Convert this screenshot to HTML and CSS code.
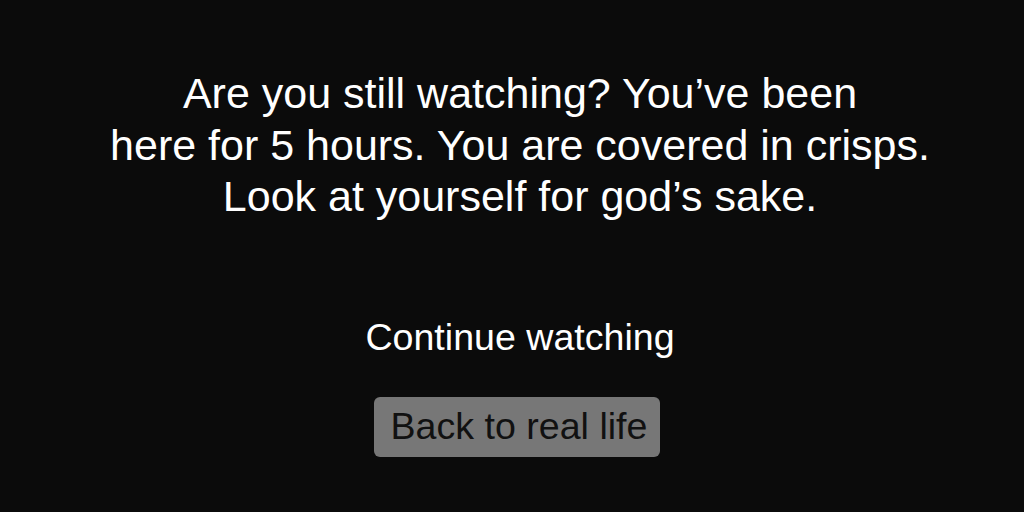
FILE: index.html
```html
<!DOCTYPE html>
<html lang="en">
<head>
<meta charset="utf-8">
<title>Are you still watching?</title>
<link rel="stylesheet" href="styles.css">
</head>
<body>
<main class="screen">
  <h1 class="prompt">Are you still watching? You’ve been<br>here for 5 hours. You are covered in crisps.<br>Look at yourself for god’s sake.</h1>
  <div class="actions">
    <a class="link" href="#">Continue watching</a>
    <button class="btn" type="button">Back to real life</button>
  </div>
</main>
</body>
</html>
```

FILE: styles.css
```css
html, body {
  margin: 0;
  padding: 0;
  background: #0b0b0b;
  height: 100%;
  overflow: hidden;
}
.screen {
  box-sizing: border-box;
  height: 512px;
  padding: 68px 0 0 16px;
  display: flex;
  flex-direction: column;
  align-items: center;
  font-family: "Liberation Sans", Arial, Helvetica, sans-serif;
  color: #ffffff;
  text-align: center;
}
.prompt {
  margin: 0;
  font-size: 43px;
  font-weight: normal;
  line-height: 51.5px;
}
.actions {
  margin-top: 93px;
  display: flex;
  flex-direction: column;
  align-items: center;
  gap: 38px;
}
.link {
  color: #ffffff;
  text-decoration: none;
  font-size: 37.6px;
  line-height: normal;
}
.btn {
  font-family: "Liberation Sans", Arial, Helvetica, sans-serif;
  font-size: 37.6px;
  line-height: normal;
  color: #111111;
  background: #777777;
  border: none;
  border-radius: 6px;
  padding: 8px 13px 9px 17px;
  margin-left: -6px;
}
```
